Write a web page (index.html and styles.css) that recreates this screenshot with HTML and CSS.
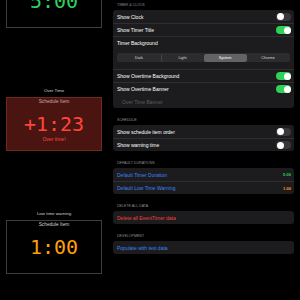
FILE: index.html
```html
<!DOCTYPE html>
<html>
<head>
<meta charset="utf-8">
<link rel="stylesheet" href="styles.css">
</head>
<body>
<div class="page">
  <div class="previews">
    <div class="case">
      <div class="box">
        <div class="item">Schedule Item</div>
        <div class="digits green">5:00</div>
      </div>
    </div>
    <div class="case">
      <div class="case-label">Over Time</div>
      <div class="box over">
        <div class="item">Schedule Item</div>
        <div class="digits red">+1:23</div>
        <div class="over-text">Over time!</div>
      </div>
    </div>
    <div class="case">
      <div class="case-label">Low time warning</div>
      <div class="box">
        <div class="item">Schedule Item</div>
        <div class="digits orange">1:00</div>
      </div>
    </div>
  </div>

  <div class="settings">
    <div class="section">
      <div class="sec-head">Timer &amp; Clock</div>
      <div class="card">
        <div class="row"><span>Show Clock</span><span class="toggle"><span class="knob"></span></span></div>
        <div class="row sep"><span>Show Timer Title</span><span class="toggle on"><span class="knob"></span></span></div>
        <div class="row sep tall">
          <span class="tall-label">Timer Background</span>
          <div class="segmented">
            <span class="seg">Dark</span>
            <span class="seg divided">Light</span>
            <span class="seg selected">System</span>
            <span class="seg">Chrome</span>
          </div>
        </div>
        <div class="row sep"><span>Show Overtime Background</span><span class="toggle on"><span class="knob"></span></span></div>
        <div class="row sep"><span>Show Overtime Banner</span><span class="toggle on"><span class="knob"></span></span></div>
        <div class="row disabled"><span>Over Time Banner</span></div>
      </div>
    </div>

    <div class="section">
      <div class="sec-head">Schedule</div>
      <div class="card">
        <div class="row"><span>Show schedule item order</span><span class="toggle"><span class="knob"></span></span></div>
        <div class="row sep"><span>Show warning time</span><span class="toggle"><span class="knob"></span></span></div>
      </div>
    </div>

    <div class="section">
      <div class="sec-head">Default Durations</div>
      <div class="card">
        <div class="row link"><span>Default Timer Duration</span><span class="value green">5:00</span></div>
        <div class="row sep link"><span>Default Low Time Warning</span><span class="value orange">1:00</span></div>
      </div>
    </div>

    <div class="section">
      <div class="sec-head">Delete All Data</div>
      <div class="card">
        <div class="row danger"><span>Delete all EventTimer data</span></div>
      </div>
    </div>

    <div class="section">
      <div class="sec-head">Development</div>
      <div class="card">
        <div class="row link"><span>Populate with test data</span></div>
      </div>
    </div>
  </div>
</div>
</body>
</html>
```

FILE: styles.css
```css
html, body {
  margin: 0;
  padding: 0;
  background: #000;
  height: 100%;
  overflow: hidden;
}

body {
  font-family: "Liberation Sans", Arial, sans-serif;
  color: #fff;
}

.page {
  display: grid;
  grid-template-columns: 108px 181px;
  column-gap: 5px;
  align-items: start;
}

/* ---------- previews ---------- */
.previews {
  display: flex;
  flex-direction: column;
  margin-top: -95px;
  padding-left: 6px;
}

.case {
  height: 123px;
  display: flex;
  flex-direction: column;
  justify-content: flex-end;
}

.case-label {
  width: 96px;
  text-align: center;
  font-size: 4.4px;
  line-height: 6px;
  color: #d4d4d4;
  margin-bottom: 3px;
}

.box {
  width: 96px;
  height: 54px;
  box-sizing: border-box;
  border: 1px solid #3d3d3f;
  padding-top: 1px;
  display: flex;
  flex-direction: column;
  align-items: center;
  background: #000;
}

.box.over {
  background: #4a1511;
  border-color: #6f2a24;
}

.item {
  font-size: 4.8px;
  line-height: 6px;
  color: #cfcfcf;
}

.box.over .item {
  color: #c9a9a6;
}

.digits {
  margin-top: 8px;
  font-family: "DejaVu Sans Mono", monospace;
  font-size: 20px;
  line-height: 23px;
}

.over-text {
  font-size: 5px;
  line-height: 6px;
  color: #ff453a;
}

.green { color: #30d158; }
.red { color: #ff453a; }
.orange { color: #ff9f0a; }

/* ---------- settings ---------- */
.settings {
  padding-top: 3px;
  display: flex;
  flex-direction: column;
}

.section + .section {
  margin-top: 10px;
}

.sec-head {
  height: 5px;
  line-height: 5px;
  font-size: 3.6px;
  color: #8e8e93;
  text-transform: uppercase;
  padding-left: 4px;
  margin-bottom: 2px;
}

.card {
  background: #1c1c1e;
  border-radius: 3px;
}

.row {
  height: 13px;
  box-sizing: border-box;
  display: flex;
  align-items: center;
  justify-content: space-between;
  padding: 0 3px 0 4px;
  font-size: 5px;
  color: #fff;
}

.row.sep {
  border-top: 1px solid #2f2f31;
}

.row.tall {
  height: 33px;
  flex-direction: column;
  align-items: stretch;
  justify-content: flex-start;
  padding: 0 4px 7px 4px;
}

.tall-label {
  height: 12px;
  line-height: 12px;
}

.row.disabled {
  color: #5c5c60;
  padding-left: 9px;
}

.row.link { color: #3a84f0; }
.row.danger { color: #f0443a; }

.value {
  font-size: 4px;
  font-weight: bold;
}

.toggle {
  width: 15px;
  height: 8px;
  box-sizing: border-box;
  padding: 0.5px;
  border-radius: 4px;
  background: #39393d;
  display: flex;
  justify-content: flex-start;
}

.toggle.on {
  background: #30d158;
  justify-content: flex-end;
}

.knob {
  width: 7px;
  height: 7px;
  border-radius: 50%;
  background: #fff;
}

.segmented {
  margin-top: 4px;
  height: 9px;
  display: grid;
  grid-template-columns: repeat(4, 1fr);
  background: #2c2c2e;
  border-radius: 2px;
  padding: 0.5px;
  box-sizing: border-box;
}

.seg {
  display: flex;
  align-items: center;
  justify-content: center;
  font-size: 3.8px;
  color: #d8d8dc;
  border-radius: 2px;
}

.seg.divided {
  border-left: 1px solid #48484a;
}

.seg.selected {
  background: #636366;
  color: #fff;
}
```
